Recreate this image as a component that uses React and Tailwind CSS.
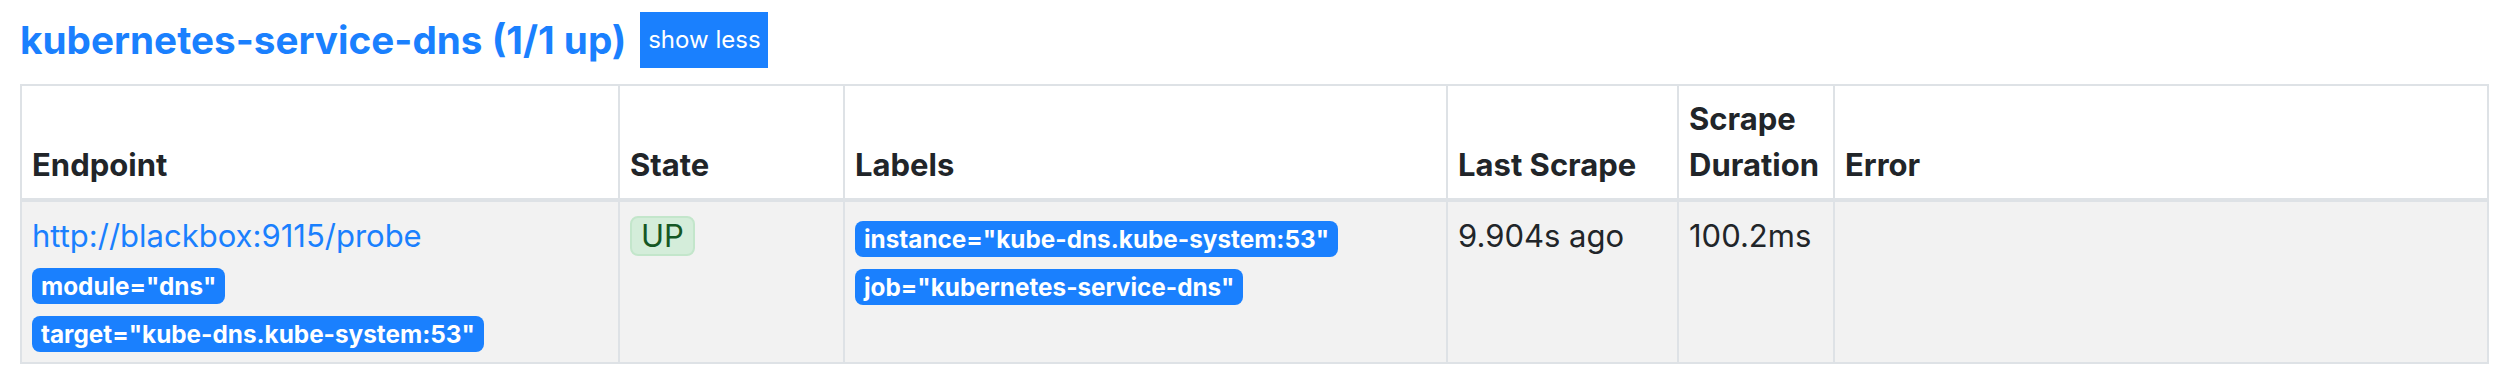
const labels = {
  target: [
    { name: 'module', value: 'dns' },
    { name: 'target', value: 'kube-dns.kube-system:53' },
  ],
  shown: [
    { name: 'instance', value: 'kube-dns.kube-system:53' },
    { name: 'job', value: 'kubernetes-service-dns' },
  ],
}

const Badge = ({ name, value, first }) => (
  <div className={first ? 'mt-[9px] leading-none' : 'mt-[12px] leading-none'}>
    <span className="inline-flex h-[36px] items-center rounded-[8px] bg-[#1a80fe] px-[9px] text-[24.3px] font-bold text-white">
      {name}="{value}"
    </span>
  </div>
)

const Th = ({ children, first }) => (
  <div
    className={`flex flex-col justify-end border-b-4 border-[#dee2e6] p-[10px] text-[31px] font-bold leading-[46px] ${
      first ? '' : 'border-l-2'
    }`}
  >
    {children}
  </div>
)

const Td = ({ children, first }) => (
  <div
    className={`border-[#dee2e6] bg-[#f2f2f2] p-[10px] text-[31px] leading-[47px] ${first ? '' : 'border-l-2'}`}
  >
    {children}
  </div>
)

const App = () => {
  return (
    <div className="min-h-screen bg-white px-[20px] pt-[12px] font-['Inter',sans-serif] text-[#212529]">
      <div className="flex items-center gap-[14px]">
        <h2 className="text-[38.7px] font-bold leading-[56px] text-[#1a80fe]">kubernetes-service-dns (1/1 up)</h2>
        <button className="h-[56px] w-[128px] bg-[#1a80fe] text-[24px] text-white">show less</button>
      </div>

      <div className="mt-[16px] grid w-[2469px] grid-cols-[596px_225px_603px_231px_156px_1fr] border-2 border-[#dee2e6]">
        <Th first>Endpoint</Th>
        <Th>State</Th>
        <Th>Labels</Th>
        <Th>Last Scrape</Th>
        <Th>Scrape Duration</Th>
        <Th>Error</Th>

        <Td first>
          <a href="#" className="text-[#1a80fe]">http://blackbox:9115/probe</a>
          {labels.target.map((l, i) => (
            <Badge key={l.name} {...l} first={i === 0} />
          ))}
        </Td>
        <Td>
          <span className="inline-flex h-[40px] items-center rounded-[8px] border-2 border-[#c3e6cb] bg-[#d4edda] px-[9px] text-[31px] text-[#155724]">
            UP
          </span>
        </Td>
        <Td>
          {labels.shown.map((l, i) => (
            <Badge key={l.name} {...l} first={i === 0} />
          ))}
        </Td>
        <Td>9.904s ago</Td>
        <Td>100.2ms</Td>
        <Td></Td>
      </div>
    </div>
  )
}

export default App
